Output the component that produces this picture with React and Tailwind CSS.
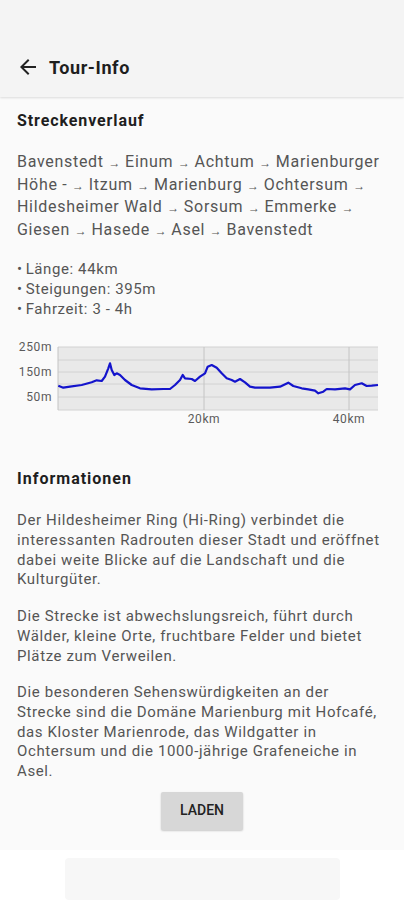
import React from "react";

const pts = [
  [58.3, 385.7], [63.3, 387.7], [70, 386.7], [81.7, 385], [91.7, 382.3], [96.7, 380.3], [101.7, 381],
  [105, 376.7], [108.3, 368.3], [110, 363.3], [111.7, 370], [114.3, 375], [116.7, 373.3], [120, 375],
  [125, 380], [131.7, 385], [140, 388.3], [151.7, 389.3], [163.3, 389], [170, 389], [175, 385],
  [180, 380], [182.7, 375], [185, 378.3], [191.7, 379], [195, 381], [200, 376.7], [205, 373.3],
  [207.7, 366.7], [211.7, 365], [216.7, 367.7], [221.7, 373.3], [226.7, 378.3], [231.7, 380],
  [235, 381.7], [240, 379], [245, 382.3], [250, 386.7], [255, 387.7], [270, 387.7], [280, 386.7],
  [288.3, 382.7], [293.3, 386], [301.7, 388.3], [308.3, 389.3], [315, 390.7], [318.3, 393.3],
  [323.3, 391.7], [326.7, 389], [335, 389.3], [345, 388.3], [350, 389.3], [355, 385], [361.7, 383.3],
  [366.7, 386], [371.7, 385.7], [378, 385],
];

function Chart() {
  const ox = 10;
  const oy = 337;
  const d = pts.map((p, i) => `${i ? "L" : "M"}${(p[0] - ox).toFixed(1)} ${(p[1] - oy).toFixed(1)}`).join(" ");
  const hy = [347, 360, 372, 384, 397, 410];
  return (
    <svg width="372" height="92" viewBox="0 0 372 92" className="block">
      <rect x={58 - ox} y={347 - oy} width={378 - 58} height={410 - 347} fill="#e9e9e9" />
      {hy.map((y) => (
        <line key={y} x1={58 - ox} x2={378 - ox} y1={y - oy} y2={y - oy} stroke="#d2d2d2" strokeWidth="1" />
      ))}
      {[58, 204, 349].map((x) => (
        <line key={x} x1={x - ox} x2={x - ox} y1={347 - oy} y2={410 - oy} stroke="#c4c4c4" strokeWidth="1" />
      ))}
      <path d={d} fill="none" stroke="#1414cc" strokeWidth="2.2" strokeLinejoin="round" />
      <g fill="#5a5a5a" fontSize="12" letterSpacing="0.6" fontFamily="Roboto, sans-serif">
        <text x={52 - ox} y={351 - oy} textAnchor="end">250m</text>
        <text x={52 - ox} y={376 - oy} textAnchor="end">150m</text>
        <text x={52 - ox} y={401 - oy} textAnchor="end">50m</text>
        <text x={204 - ox} y={423 - oy} textAnchor="middle">20km</text>
        <text x={349 - ox} y={423 - oy} textAnchor="middle">40km</text>
      </g>
    </svg>
  );
}

const A = () => <span className="text-[12px] leading-none tracking-normal">→</span>;

export default function App() {
  return (
    <div className="w-[404px] h-[900px] bg-[#fafafa] font-['Roboto',sans-serif] flex flex-col overflow-hidden">
      <div className="h-[97px] bg-[#f4f4f4] shadow-[0_1px_2px_rgba(0,0,0,0.12)] pt-[39px] shrink-0 relative z-10">
        <div className="h-[56px] flex items-center pl-[16px]">
          <svg width="24" height="24" viewBox="0 0 24 24" fill="#222">
            <path d="M20 11H7.83l5.59-5.59L12 4l-8 8 8 8 1.41-1.41L7.83 13H20v-2z" />
          </svg>
          <span className="ml-[9px] text-[18px] font-bold tracking-[0.6px] text-[#1e1e1e]">Tour-Info</span>
        </div>
      </div>

      <div className="flex-1 flex flex-col px-[17px]">
        <div className="mt-[14px] text-[16px] leading-[20px] font-bold tracking-[0.9px] text-[#1e1e1e]">Streckenverlauf</div>
        <p className="mt-[20px] text-[16px] leading-[22.6px] tracking-[0.7px] text-[#555]">
          Bavenstedt <A /> Einum <A /> Achtum <A /> Marienburger Höhe - <A /> Itzum <A /> Marienburg <A /> Ochtersum <A /> Hildesheimer Wald <A /> Sorsum <A /> Emmerke <A /> Giesen <A /> Hasede <A /> Asel <A /> Bavenstedt
        </p>
        <div className="mt-[18px] text-[15px] leading-[20px] tracking-[0.6px] text-[#555]">
          <div><span className="mr-[3px]">•</span>Länge: 44km</div>
          <div><span className="mr-[3px]">•</span>Steigungen: 395m</div>
          <div><span className="mr-[3px]">•</span>Fahrzeit: 3 - 4h</div>
        </div>
        <div className="mt-[18px] -ml-[7px]">
          <Chart />
        </div>
        <div className="mt-[40px] text-[16px] leading-[20px] font-bold tracking-[1px] text-[#1e1e1e]">Informationen</div>
        <div className="mt-[22px] text-[15px] leading-[19.7px] tracking-[0.62px] text-[#555]">
          <p className="mb-[17px]">
            Der Hildesheimer Ring (Hi-Ring) verbindet die interessanten Radrouten dieser Stadt und eröffnet dabei weite Blicke auf die Landschaft und die Kulturgüter.
          </p>
          <p className="mb-[17px]">
            Die Strecke ist abwechslungsreich, führt durch Wälder, kleine Orte, fruchtbare Felder und bietet Plätze zum Verweilen.
          </p>
          <p>
            Die besonderen Sehenswürdigkeiten an der Strecke sind die Domäne Marienburg mit Hofcafé, das Kloster Marienrode, das Wildgatter in Ochtersum und die 1000-jährige Grafeneiche in Asel.
          </p>
        </div>
        <div className="mt-[10px] flex justify-center">
          <button className="w-[82px] h-[38px] bg-[#d7d7d7] rounded-[2px] shadow-[0_1px_2px_rgba(0,0,0,0.2)] text-[14px] font-medium text-[#222]">
            LADEN
          </button>
        </div>
      </div>
      <div className="h-[50px] bg-white flex justify-center pt-[8px] shrink-0">
        <div className="w-[275px] h-[42px] bg-[#f7f7f7] rounded-[4px]"></div>
      </div>
    </div>
  );
}
